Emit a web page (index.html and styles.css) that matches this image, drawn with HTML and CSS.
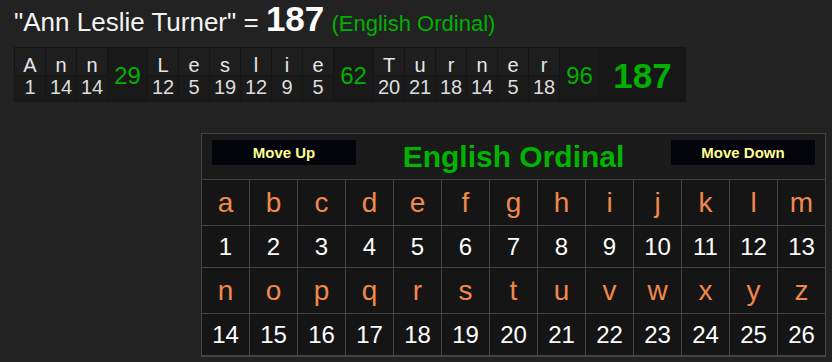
FILE: index.html
```html
<!DOCTYPE html>
<html>
<head>
<meta charset="utf-8">
<link rel="stylesheet" href="styles.css">
</head>
<body>
<div class="page">
  <div class="title"><span class="phrase">"Ann Leslie Turner" = </span><span class="total">187</span> <span class="cipher">(English Ordinal)</span></div>

  <table class="breakdown">
    <tr class="letters">
      <td class="l">A</td><td class="l">n</td><td class="l">n</td>
      <td class="sum" rowspan="2">29</td>
      <td class="l">L</td><td class="l">e</td><td class="l">s</td><td class="l">l</td><td class="l">i</td><td class="l">e</td>
      <td class="sum" rowspan="2">62</td>
      <td class="l">T</td><td class="l">u</td><td class="l">r</td><td class="l">n</td><td class="l">e</td><td class="l">r</td>
      <td class="sum" rowspan="2">96</td>
      <td class="grand" rowspan="2">187</td>
    </tr>
    <tr class="values">
      <td class="n">1</td><td class="n">14</td><td class="n">14</td>
      <td class="n">12</td><td class="n">5</td><td class="n">19</td><td class="n">12</td><td class="n">9</td><td class="n">5</td>
      <td class="n">20</td><td class="n">21</td><td class="n">18</td><td class="n">14</td><td class="n">5</td><td class="n">18</td>
    </tr>
  </table>

  <div class="chart-row">
    <div class="chart">
      <div class="chart-head">
        <div class="btn">Move Up</div>
        <div class="chart-title">English Ordinal</div>
        <div class="btn">Move Down</div>
      </div>
      <div class="chart-grid">
        <div class="ch">a</div><div class="ch">b</div><div class="ch">c</div><div class="ch">d</div><div class="ch">e</div><div class="ch">f</div><div class="ch">g</div><div class="ch">h</div><div class="ch">i</div><div class="ch">j</div><div class="ch">k</div><div class="ch">l</div><div class="ch">m</div>
        <div class="num">1</div><div class="num">2</div><div class="num">3</div><div class="num">4</div><div class="num">5</div><div class="num">6</div><div class="num">7</div><div class="num">8</div><div class="num">9</div><div class="num">10</div><div class="num">11</div><div class="num">12</div><div class="num">13</div>
        <div class="ch">n</div><div class="ch">o</div><div class="ch">p</div><div class="ch">q</div><div class="ch">r</div><div class="ch">s</div><div class="ch">t</div><div class="ch">u</div><div class="ch">v</div><div class="ch">w</div><div class="ch">x</div><div class="ch">y</div><div class="ch">z</div>
        <div class="num">14</div><div class="num">15</div><div class="num">16</div><div class="num">17</div><div class="num">18</div><div class="num">19</div><div class="num">20</div><div class="num">21</div><div class="num">22</div><div class="num">23</div><div class="num">24</div><div class="num">25</div><div class="num">26</div>
      </div>
    </div>
  </div>
</div>
</body>
</html>
```

FILE: styles.css
```css
html, body {
  margin: 0;
  padding: 0;
  background: #222222;
}

body {
  font-family: "Liberation Sans", Arial, sans-serif;
  color: #ffffff;
  width: 832px;
  height: 362px;
  overflow: hidden;
}

.page {
  padding: 4px 6px 0 14px;
}

.title {
  font-size: 26px;
  line-height: 30px;
  height: 33px;
  white-space: nowrap;
}

.phrase {
  color: #f4f4f4;
}

.total {
  font-size: 35px;
  font-weight: bold;
  color: #ffffff;
}

.cipher {
  font-size: 22px;
  color: #00b000;
}

.breakdown {
  margin-top: 10px;
  border-collapse: collapse;
  background: #1c1c1c;
}

.breakdown td {
  border: 1px solid #151515;
  padding: 0;
  text-align: center;
  font-size: 20px;
  line-height: 20px;
}

.breakdown td.l {
  width: 30px;
  height: 20px;
  padding-top: 7px;
  color: #e6e6e6;
  background: #1e1e1e;
}

.breakdown td.n {
  width: 30px;
  height: 20px;
  padding: 1px 0 4px;
  color: #dddddd;
  background: #1b1b1b;
}

.breakdown td.sum {
  width: 39px;
  font-size: 24px;
  line-height: 24px;
  color: #00b000;
  background: #191919;
  vertical-align: middle;
  padding-top: 2px;
}

.breakdown td.grand {
  width: 85px;
  font-size: 35px;
  line-height: 36px;
  font-weight: bold;
  color: #00b000;
  background: #171717;
  vertical-align: middle;
  padding-top: 2px;
}

.chart-row {
  display: flex;
  justify-content: flex-end;
  margin-top: 31px;
}

.chart {
  border: 1px solid #444444;
  border-bottom-width: 2px;
  background: #434343;
  display: flex;
  flex-direction: column;
  gap: 1px;
}

.chart-head {
  height: 45px;
  background: #1a1a1a;
  display: flex;
  align-items: center;
  justify-content: space-between;
  padding: 0 10px;
}

.btn {
  align-self: flex-start;
  margin-top: 6px;
  width: 144px;
  height: 25px;
  background: #03030a;
  color: #ffff8f;
  font-size: 15px;
  font-weight: bold;
  line-height: 25px;
  text-align: center;
}

.chart-title {
  font-size: 30px;
  font-weight: bold;
  color: #00b400;
}

.chart-grid {
  display: grid;
  grid-template-columns: repeat(13, 47px);
  grid-template-rows: 45px 41px 45px 41px;
  gap: 1px;
}

.chart-grid > div {
  background: #151515;
  display: flex;
  align-items: center;
  justify-content: center;
}

.ch {
  font-size: 28px;
  color: #f0884c;
}

.num {
  font-size: 24px;
  color: #ffffff;
}
```
